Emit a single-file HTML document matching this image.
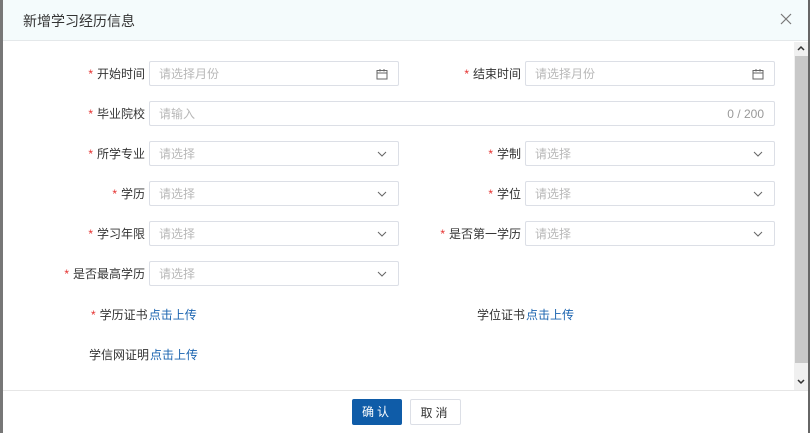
<!DOCTYPE html>
<html><head><meta charset="utf-8"><style>
*{box-sizing:border-box;margin:0;padding:0}
body{width:810px;height:433px;overflow:hidden;background:#fff;font-family:"Liberation Sans","Noto Sans CJK SC",sans-serif;font-size:12px;color:#333;position:relative}
.lb{position:absolute;left:0;top:0;width:3px;height:433px;background:#777}
.rb{position:absolute;right:0;top:0;width:2px;height:433px;background:#666}
.hd{position:absolute;left:3px;top:0;width:805px;height:41px;background:#f4fbfc;border-bottom:1px solid #e4e8ea}
.hd .t{position:absolute;left:20px;top:11px;font-size:14px;color:#333}
.x{position:absolute;left:780px;top:13px}
.sb{position:absolute;left:794px;top:42px;width:14px;height:349px;background:#f0f0f0}
.th{position:absolute;left:795px;top:56px;width:13px;height:307px;background:#c8c8c8}
.ft{position:absolute;left:3px;top:390px;width:805px;height:1px;background:#e6e6e6}
.lab{position:absolute;text-align:right;height:25px;line-height:27px;white-space:nowrap}
.lab b{color:#e5312f;font-weight:normal;margin-right:4px}
.in{position:absolute;height:25px;border:1px solid #dcdfe6;border-radius:2px;line-height:25px;padding-left:9px;color:#b8b8b8}
.in svg{position:absolute;right:10px;top:6px}
.ln{color:#1b64b0;margin-left:1px}
.btn{position:absolute;top:399px;height:26px;line-height:27px;text-align:center;font-size:12px;letter-spacing:3px;border-radius:2px}
</style></head><body>
<div class="lb"></div><div class="rb"></div>
<div class="hd"><div class="t">新增学习经历信息</div></div>
<svg class="x" width="12" height="12" viewBox="0 0 12 12"><path d="M1 1L11 11M11 1L1 11" stroke="#777" stroke-width="1.2"/></svg>
<div class="sb"></div><div class="th"></div>
<svg style="position:absolute;left:797px;top:45px" width="8" height="6"><path d="M1 5L4 2L7 5" stroke="#333" stroke-width="1.5" fill="none"/></svg>
<svg style="position:absolute;left:797px;top:379px" width="8" height="6"><path d="M1 1L4 4L7 1" stroke="#333" stroke-width="1.5" fill="none"/></svg>
<div class="ft"></div>

<div class="lab" style="right:665px;top:61px"><b>*</b>开始时间</div>
<div class="in" style="left:149px;top:61px;width:250px">请选择月份<svg width="12" height="12" viewBox="0 0 12 12"><rect x="1" y="2.5" width="10" height="8.5" fill="none" stroke="#666"/><path d="M1 5h10M4 1v2.5M8 1v2.5" stroke="#666"/></svg></div>
<div class="lab" style="right:289px;top:61px"><b>*</b>结束时间</div>
<div class="in" style="left:525px;top:61px;width:250px">请选择月份<svg width="12" height="12" viewBox="0 0 12 12"><rect x="1" y="2.5" width="10" height="8.5" fill="none" stroke="#666"/><path d="M1 5h10M4 1v2.5M8 1v2.5" stroke="#666"/></svg></div>

<div class="lab" style="right:665px;top:101px"><b>*</b>毕业院校</div>
<div class="in" style="left:149px;top:101px;width:626px">请输入<span style="position:absolute;right:10px;color:#999">0 / 200</span></div>

<div class="lab" style="right:665px;top:141px"><b>*</b>所学专业</div>
<div class="in" style="left:149px;top:141px;width:250px">请选择<svg width="12" height="12" viewBox="0 0 12 12"><path d="M2 4l4 4 4-4" stroke="#666" fill="none"/></svg></div>
<div class="lab" style="right:289px;top:141px"><b>*</b>学制</div>
<div class="in" style="left:525px;top:141px;width:250px">请选择<svg width="12" height="12" viewBox="0 0 12 12"><path d="M2 4l4 4 4-4" stroke="#666" fill="none"/></svg></div>

<div class="lab" style="right:665px;top:181px"><b>*</b>学历</div>
<div class="in" style="left:149px;top:181px;width:250px">请选择<svg width="12" height="12" viewBox="0 0 12 12"><path d="M2 4l4 4 4-4" stroke="#666" fill="none"/></svg></div>
<div class="lab" style="right:289px;top:181px"><b>*</b>学位</div>
<div class="in" style="left:525px;top:181px;width:250px">请选择<svg width="12" height="12" viewBox="0 0 12 12"><path d="M2 4l4 4 4-4" stroke="#666" fill="none"/></svg></div>

<div class="lab" style="right:665px;top:221px"><b>*</b>学习年限</div>
<div class="in" style="left:149px;top:221px;width:250px">请选择<svg width="12" height="12" viewBox="0 0 12 12"><path d="M2 4l4 4 4-4" stroke="#666" fill="none"/></svg></div>
<div class="lab" style="right:289px;top:221px"><b>*</b>是否第一学历</div>
<div class="in" style="left:525px;top:221px;width:250px">请选择<svg width="12" height="12" viewBox="0 0 12 12"><path d="M2 4l4 4 4-4" stroke="#666" fill="none"/></svg></div>

<div class="lab" style="right:665px;top:261px"><b>*</b>是否最高学历</div>
<div class="in" style="left:149px;top:261px;width:250px">请选择<svg width="12" height="12" viewBox="0 0 12 12"><path d="M2 4l4 4 4-4" stroke="#666" fill="none"/></svg></div>

<div class="lab" style="left:91px;top:302px"><b>*</b>学历证书<span class="ln">点击上传</span></div>
<div class="lab" style="left:477px;top:302px">学位证书<span class="ln">点击上传</span></div>
<div class="lab" style="left:89px;top:342px">学信网证明<span class="ln">点击上传</span></div>

<div class="btn" style="left:352px;width:50px;background:#0f5ca8;color:#fff">确认</div>
<div class="btn" style="left:410px;width:51px;border:1px solid #dcdfe6;color:#333">取消</div>
</body></html>
